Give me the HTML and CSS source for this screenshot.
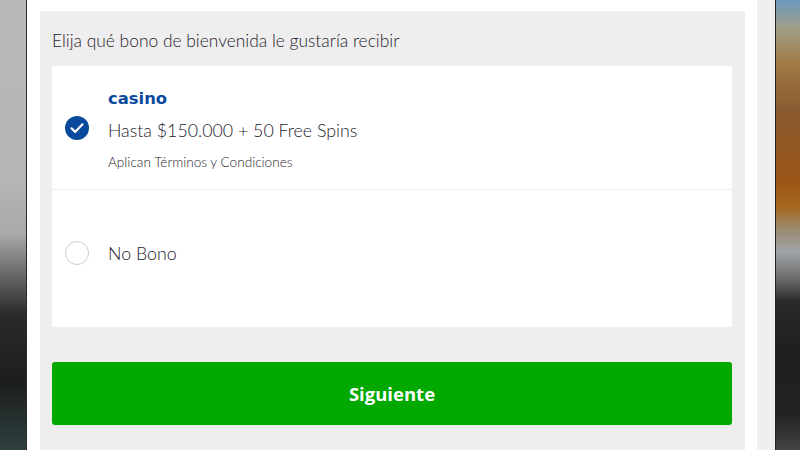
FILE: index.html
```html
<!DOCTYPE html>
<html lang="es">
<head>
<meta charset="utf-8">
<link rel="stylesheet" href="styles.css">
</head>
<body>
<div class="screen">
  <div class="bg bg-left"></div>
  <div class="frame">
    <div class="modal">
      <div class="panel">
        <p class="title">Elija qué bono de bienvenida le gustaría recibir</p>
        <div class="card">
          <div class="option option-first">
            <span class="radio radio-checked">
              <svg width="24" height="24" viewBox="0 0 24 24"><circle cx="12" cy="12" r="12" fill="#0a4a9c"/><path d="M6.5 12.3l3.6 3.6 7.4-7.6" fill="none" stroke="#fff" stroke-width="2.2" stroke-linecap="round" stroke-linejoin="round"/></svg>
            </span>
            <div class="option-text">
              <div class="brand">casino</div>
              <div class="offer">Hasta $150.000 + 50 Free Spins</div>
              <div class="terms">Aplican Términos y Condiciones</div>
            </div>
          </div>
          <div class="option option-second">
            <span class="radio radio-empty"></span>
            <div class="option-text">
              <div class="offer">No Bono</div>
            </div>
          </div>
        </div>
        <button class="next">Siguiente</button>
      </div>
    </div>
    <div class="scrollbar"></div>
  </div>
  <div class="bg bg-right"></div>
</div>
</body>
</html>
```
FILE: styles.css
```css
* { box-sizing: border-box; }
html, body { margin: 0; padding: 0; }
body { width: 800px; height: 450px; overflow: hidden; font-family: Lato, "Open Sans", sans-serif; }
.screen { display: flex; width: 800px; height: 450px; }
.bg { height: 450px; }
.bg-left {
  width: 27px;
  background: linear-gradient(to bottom, #b9b9b9 0%, #b4b5b7 40%, #a9a9a9 52%, #6f6f6f 60%, #2a2a2a 70%, #1c1d1d 85%, #2f4040 100%);
  border-right: 1px solid #2a2a2a;
}
.bg-right {
  width: 25px;
  border-left: 1px solid #222;
  background: linear-gradient(to bottom, #6a98c0 0%, #9fa08a 6%, #a07a45 14%, #8a5a30 25%, #9a5417 40%, #a7681d 46%, #9a8a70 51%, #a0a4a8 56%, #6a6a6a 62%, #2a2a2a 67%, #1e1f1f 78%, #222 92%, #444 100%);
}
.frame { display: flex; width: 748px; height: 450px; }
.modal { width: 730px; background: #fff; padding: 11px 12px 0 13px; }
.scrollbar { width: 18px; background: #efefef; }
.panel { background: #eeeeee; padding: 18px 13px 20px 12px; height: 460px; }
.title { margin: 0 0 13px; font-size: 17.4px; font-weight: 300; line-height: 24px; color: #1f222b; }
.card { background: #fff; }
.option { display: flex; align-items: center; padding-left: 13px; gap: 19px; }
.option-first { height: 124px; border-bottom: 1px solid #eeeeee; align-items: flex-start; }
.option-first .radio { margin-top: 50px; }
.option-first .option-text { padding-top: 22px; }
.option-second { height: 137px; padding-bottom: 12px; }
.radio { width: 24px; height: 24px; flex: none; display: block; }
.radio svg { display: block; }
.radio-empty { border: 1px solid #cccccc; border-radius: 50%; }
.brand { font-family: "DejaVu Sans", sans-serif; font-weight: 700; font-size: 16.4px; line-height: 22px; color: #0a4a9c; margin-bottom: 8px; }
.offer { font-size: 17.8px; font-weight: 300; line-height: 24px; color: #1f222b; }
.terms { font-size: 13.6px; font-weight: 300; line-height: 16px; color: #1f222b; margin-top: 12px; }
.next {
  display: block; width: 100%; height: 63px; margin-top: 35px;
  background: #00a800; border: none; border-radius: 3px;
  color: #fff; font-family: "Open Sans", Lato, sans-serif; font-weight: 700; font-size: 18.5px;
}
```
